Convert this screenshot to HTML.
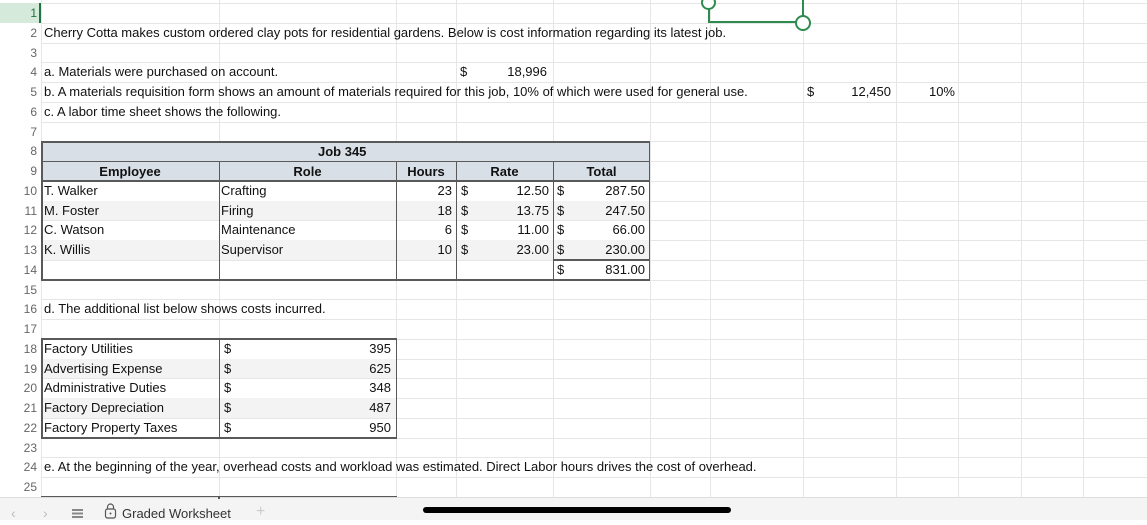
<!DOCTYPE html>
<html><head><meta charset="utf-8"><style>
*{margin:0;padding:0;box-sizing:border-box}
body{width:1147px;height:520px;overflow:hidden;background:#fff;font-family:"Liberation Sans",sans-serif;font-size:13px;color:#111;position:relative}
.h{position:absolute;left:41px;right:0;height:1px;background:#e6e6e6}
.v{position:absolute;top:0;height:497px;width:1px;background:#e6e6e6}
.rn{position:absolute;left:0;width:37px;text-align:right;color:#666;height:20px;line-height:20px;font-size:12px}
.t{position:absolute;height:20px;line-height:20px;white-space:nowrap}
.r{text-align:right}
.b{font-weight:bold}
.bx{position:absolute;background:#595959}
</style></head><body>
<div style="position:absolute;left:0;top:3px;width:41px;height:20px;background:#d6eadc"></div>
<div style="position:absolute;left:39px;top:3px;width:2px;height:20px;background:#217346"></div>
<div class="v" style="left:41px"></div><div class="v" style="left:219px"></div><div class="v" style="left:396px"></div><div class="v" style="left:456px"></div><div class="v" style="left:553px"></div><div class="v" style="left:650px"></div><div class="v" style="left:710px"></div><div class="v" style="left:803px"></div><div class="v" style="left:896px"></div><div class="v" style="left:958px"></div><div class="v" style="left:1021px"></div><div class="v" style="left:1083px"></div>
<div class="h" style="top:3px"></div><div class="h" style="top:22.75px"></div><div class="h" style="top:42.5px"></div><div class="h" style="top:62.25px"></div><div class="h" style="top:82px"></div><div class="h" style="top:101.75px"></div><div class="h" style="top:121.5px"></div><div class="h" style="top:141.25px"></div><div class="h" style="top:161px"></div><div class="h" style="top:180.75px"></div><div class="h" style="top:200.5px"></div><div class="h" style="top:220.25px"></div><div class="h" style="top:240px"></div><div class="h" style="top:259.75px"></div><div class="h" style="top:279.5px"></div><div class="h" style="top:299.25px"></div><div class="h" style="top:319px"></div><div class="h" style="top:338.75px"></div><div class="h" style="top:358.5px"></div><div class="h" style="top:378.25px"></div><div class="h" style="top:398px"></div><div class="h" style="top:417.75px"></div><div class="h" style="top:437.5px"></div><div class="h" style="top:457.25px"></div><div class="h" style="top:477px"></div>
<div class="rn" style="top:3px;color:#217346">1</div><div class="rn" style="top:22.75px">2</div><div class="rn" style="top:42.5px">3</div><div class="rn" style="top:62.25px">4</div><div class="rn" style="top:82px">5</div><div class="rn" style="top:101.75px">6</div><div class="rn" style="top:121.5px">7</div><div class="rn" style="top:141.25px">8</div><div class="rn" style="top:161px">9</div><div class="rn" style="top:180.75px">10</div><div class="rn" style="top:200.5px">11</div><div class="rn" style="top:220.25px">12</div><div class="rn" style="top:240px">13</div><div class="rn" style="top:259.75px">14</div><div class="rn" style="top:279.5px">15</div><div class="rn" style="top:299.25px">16</div><div class="rn" style="top:319px">17</div><div class="rn" style="top:338.75px">18</div><div class="rn" style="top:358.5px">19</div><div class="rn" style="top:378.25px">20</div><div class="rn" style="top:398px">21</div><div class="rn" style="top:417.75px">22</div><div class="rn" style="top:437.5px">23</div><div class="rn" style="top:457.25px">24</div><div class="rn" style="top:477px">25</div>
<div class="t" style="left:44px;top:22.75px">Cherry Cotta makes custom ordered clay pots for residential gardens. Below is cost information regarding its latest job.</div>
<div class="t" style="left:44px;top:62.25px">a. Materials were purchased on account.</div>
<div class="t" style="left:460px;top:62.25px">$</div><div class="t r" style="left:480px;width:67px;top:62.25px">18,996</div>
<div class="t" style="left:44px;top:82px">b. A materials requisition form shows an amount of materials required for this job, 10% of which were used for general use.</div>
<div class="t" style="left:807px;top:82px">$</div><div class="t r" style="left:820px;width:71px;top:82px">12,450</div><div class="t r" style="left:900px;width:55px;top:82px">10%</div>
<div class="t" style="left:44px;top:101.75px">c. A labor time sheet shows the following.</div>
<div style="position:absolute;left:41px;top:141.25px;width:609px;height:39.5px;background:#d9dfe7"></div>
<div style="position:absolute;left:41px;top:200.5px;width:609px;height:19.75px;background:#f3f3f3"></div>
<div style="position:absolute;left:41px;top:240px;width:609px;height:19.75px;background:#f3f3f3"></div>
<div class="bx" style="left:41px;top:141px;width:609px;height:1.5px"></div>
<div class="bx" style="left:41px;top:160.5px;width:609px;height:1.5px"></div>
<div class="bx" style="left:41px;top:180.25px;width:609px;height:1.5px"></div>
<div class="bx" style="left:41px;top:279px;width:609px;height:1.5px"></div>
<div class="bx" style="left:553px;top:259.25px;width:97px;height:1.5px"></div>
<div class="bx" style="left:41px;top:141px;width:1.5px;height:139px"></div>
<div class="bx" style="left:648.5px;top:141px;width:1.5px;height:139px"></div>
<div class="bx" style="left:218.5px;top:161px;width:1.5px;height:119px"></div>
<div class="bx" style="left:395.5px;top:161px;width:1.5px;height:119px"></div>
<div class="bx" style="left:455.5px;top:161px;width:1.5px;height:119px"></div>
<div class="bx" style="left:552.5px;top:161px;width:1.5px;height:119px"></div>
<div class="t b" style="left:318px;top:142px">Job 345</div>
<div class="t b" style="left:41px;width:178px;text-align:center;top:162px">Employee</div>
<div class="t b" style="left:219px;width:177px;text-align:center;top:162px">Role</div>
<div class="t b" style="left:396px;width:60px;text-align:center;top:162px">Hours</div>
<div class="t b" style="left:456px;width:97px;text-align:center;top:162px">Rate</div>
<div class="t b" style="left:553px;width:97px;text-align:center;top:162px">Total</div>
<div class="t" style="left:44px;top:181px">T. Walker</div><div class="t" style="left:221px;top:181px">Crafting</div><div class="t r" style="left:400px;width:52px;top:181px">23</div><div class="t" style="left:461px;top:181px">$</div><div class="t r" style="left:480px;width:69px;top:181px">12.50</div><div class="t" style="left:557px;top:181px">$</div><div class="t r" style="left:570px;width:75px;top:181px">287.50</div>
<div class="t" style="left:44px;top:200.5px">M. Foster</div><div class="t" style="left:221px;top:200.5px">Firing</div><div class="t r" style="left:400px;width:52px;top:200.5px">18</div><div class="t" style="left:461px;top:200.5px">$</div><div class="t r" style="left:480px;width:69px;top:200.5px">13.75</div><div class="t" style="left:557px;top:200.5px">$</div><div class="t r" style="left:570px;width:75px;top:200.5px">247.50</div>
<div class="t" style="left:44px;top:220.25px">C. Watson</div><div class="t" style="left:221px;top:220.25px">Maintenance</div><div class="t r" style="left:400px;width:52px;top:220.25px">6</div><div class="t" style="left:461px;top:220.25px">$</div><div class="t r" style="left:480px;width:69px;top:220.25px">11.00</div><div class="t" style="left:557px;top:220.25px">$</div><div class="t r" style="left:570px;width:75px;top:220.25px">66.00</div>
<div class="t" style="left:44px;top:240px">K. Willis</div><div class="t" style="left:221px;top:240px">Supervisor</div><div class="t r" style="left:400px;width:52px;top:240px">10</div><div class="t" style="left:461px;top:240px">$</div><div class="t r" style="left:480px;width:69px;top:240px">23.00</div><div class="t" style="left:557px;top:240px">$</div><div class="t r" style="left:570px;width:75px;top:240px">230.00</div>
<div class="t" style="left:557px;top:260px">$</div><div class="t r" style="left:570px;width:75px;top:260px">831.00</div>
<div class="t" style="left:44px;top:299.25px">d. The additional list below shows costs incurred.</div>
<div style="position:absolute;left:41px;top:358.5px;width:355px;height:19.75px;background:#f3f3f3"></div>
<div style="position:absolute;left:41px;top:398px;width:355px;height:19.75px;background:#f3f3f3"></div>
<div class="bx" style="left:41px;top:338.25px;width:356px;height:1.5px"></div>
<div class="bx" style="left:41px;top:437px;width:356px;height:1.5px"></div>
<div class="bx" style="left:41px;top:338.25px;width:1.5px;height:100px"></div>
<div class="bx" style="left:218.5px;top:338.25px;width:1.5px;height:100px"></div>
<div class="bx" style="left:395.5px;top:338.25px;width:1.5px;height:100px"></div>
<div class="t" style="left:44px;top:338.75px">Factory Utilities</div><div class="t" style="left:224px;top:338.75px">$</div><div class="t r" style="left:330px;width:61px;top:338.75px">395</div>
<div class="t" style="left:44px;top:358.5px">Advertising Expense</div><div class="t" style="left:224px;top:358.5px">$</div><div class="t r" style="left:330px;width:61px;top:358.5px">625</div>
<div class="t" style="left:44px;top:378.25px">Administrative Duties</div><div class="t" style="left:224px;top:378.25px">$</div><div class="t r" style="left:330px;width:61px;top:378.25px">348</div>
<div class="t" style="left:44px;top:398px">Factory Depreciation</div><div class="t" style="left:224px;top:398px">$</div><div class="t r" style="left:330px;width:61px;top:398px">487</div>
<div class="t" style="left:44px;top:417.75px">Factory Property Taxes</div><div class="t" style="left:224px;top:417.75px">$</div><div class="t r" style="left:330px;width:61px;top:417.75px">950</div>
<div class="t" style="left:44px;top:457.25px">e. At the beginning of the year, overhead costs and workload was estimated. Direct Labor hours drives the cost of overhead.</div>
<div style="position:absolute;left:708px;top:-2px;width:96px;height:25px;border:2px solid #2e8b4e"></div>
<div style="position:absolute;left:701px;top:-5px;width:15px;height:15px;border:2px solid #2e8b4e;border-radius:50%;background:#fff"></div>
<div style="position:absolute;left:795px;top:15px;width:16px;height:16px;border:2px solid #2e8b4e;border-radius:50%;background:#fff"></div>
<div style="position:absolute;left:0;top:497px;width:1147px;height:23px;background:#f4f4f4;border-top:1px solid #ddd"></div>
<div class="bx" style="left:41px;top:495.5px;width:356px;height:1.5px"></div>
<div class="bx" style="left:218px;top:495.5px;width:1.5px;height:3px"></div>
<div class="t" style="left:11px;top:504px;color:#bbb;font-size:14px;line-height:18px">&lsaquo;</div>
<div class="t" style="left:43px;top:504px;color:#bbb;font-size:14px;line-height:18px">&rsaquo;</div>
<div style="position:absolute;left:72px;top:509px;width:11px;height:1.5px;background:#888;box-shadow:0 3.5px 0 #888,0 7px 0 #888"></div>
<svg style="position:absolute;left:104px;top:503px" width="13" height="16" viewBox="0 0 13 16"><path d="M3.5 6V4a3 3 0 0 1 6 0v2" fill="none" stroke="#555" stroke-width="1.2"/><rect x="1.5" y="6" width="10" height="9" rx="2" fill="none" stroke="#555" stroke-width="1.2"/><circle cx="6.5" cy="10.5" r="1" fill="#555"/></svg>
<div class="t" style="left:122px;top:505px;font-size:13px;line-height:18px;color:#333">Graded Worksheet</div>
<div class="t" style="left:256px;top:503px;color:#ccc;font-size:16px;line-height:18px">+</div>
<div style="position:absolute;left:423px;top:507px;width:308px;height:6px;border-radius:3px;background:#000"></div>
</body></html>
